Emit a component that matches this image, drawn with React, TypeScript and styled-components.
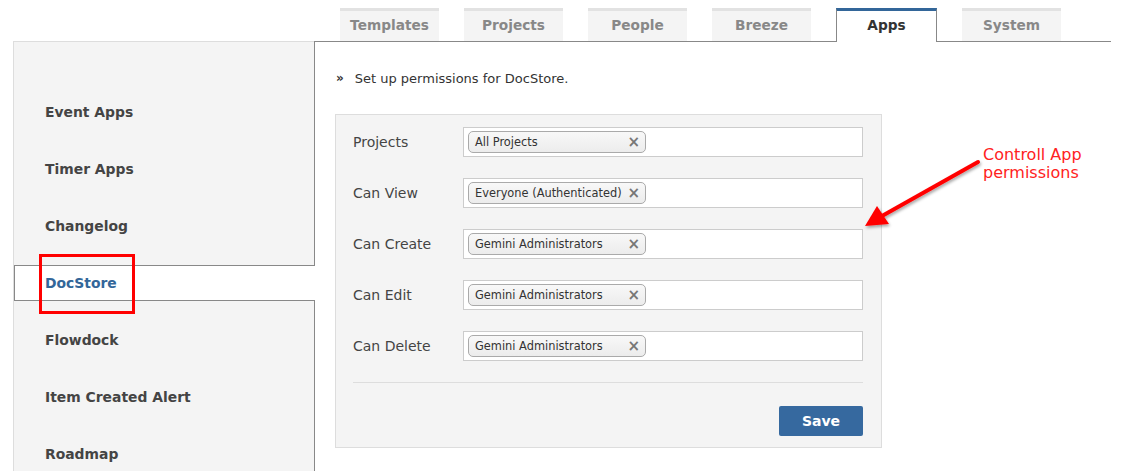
import React from "react";
import styled, { createGlobalStyle } from "styled-components";

const GlobalStyle = createGlobalStyle`
  html, body {
    margin: 0;
    padding: 0;
    background: #fff;
    font-family: "DejaVu Sans", Verdana, sans-serif;
  }
`;

const Page = styled.div`
  position: relative;
  width: 1131px;
  height: 471px;
  overflow: hidden;
  padding-top: 8px;
  box-sizing: border-box;
`;

const TabBar = styled.div`
  display: flex;
  gap: 25px;
  margin-left: 340px;
  position: relative;
  z-index: 2;
`;

const Tab = styled.div<{ $active?: boolean }>`
  width: ${(p) => (p.$active ? "101px" : "99px")};
  box-sizing: border-box;
  display: flex;
  align-items: center;
  justify-content: center;
  font-size: 13.7px;
  font-weight: bold;
  color: ${(p) => (p.$active ? "#333" : "#888")};
  background: ${(p) => (p.$active ? "#fff" : "#f4f4f4")};
  border-top: 3px solid ${(p) => (p.$active ? "#336699" : "#e2e2e2")};
  border-left: ${(p) => (p.$active ? "1px solid #888" : "none")};
  border-right: ${(p) => (p.$active ? "1px solid #888" : "none")};
  margin-bottom: ${(p) => (p.$active ? "-1px" : "0")};
  height: ${(p) => (p.$active ? "34px" : "33px")};
  padding-bottom: ${(p) => (p.$active ? "3px" : "2px")};
`;

const Body = styled.div`
  display: flex;
  margin-left: 13px;
`;

const Sidebar = styled.div`
  width: 301px;
  height: 440px;
  box-sizing: border-box;
  background: #f4f4f4;
  border-top: 1px solid #ddd;
  border-left: 1px solid #ddd;
  padding-top: 52px;
  display: flex;
  flex-direction: column;
  gap: 21px;
  position: relative;
  z-index: 1;
`;

const SideItem = styled.div<{ $active?: boolean }>`
  height: 36px;
  box-sizing: border-box;
  display: flex;
  align-items: center;
  padding-left: 30px;
  font-size: 13.9px;
  font-weight: bold;
  color: ${(p) => (p.$active ? "#336699" : "#444")};
  background: ${(p) => (p.$active ? "#fff" : "transparent")};
  border: ${(p) => (p.$active ? "1px solid #888" : "1px solid transparent")};
  border-right: none;
  margin-right: ${(p) => (p.$active ? "-1px" : "0")};
  position: relative;
`;

const Highlight = styled.div`
  position: absolute;
  left: 24px;
  top: -12px;
  width: 96px;
  height: 60px;
  box-sizing: border-box;
  border: 3px solid #f00;
`;

const Main = styled.div`
  width: 797px;
  height: 440px;
  box-sizing: border-box;
  border-top: 1px solid #888;
  border-left: 1px solid #888;
  padding: 28px 0 0 20px;
`;

const Intro = styled.div`
  display: flex;
  align-items: center;
  gap: 11px;
  padding-left: 1px;
  font-size: 13px;
  color: #333;
  height: 16px;
`;

const Chevron = styled.span`
  font-size: 12px;
  font-weight: bold;
  color: #333;
`;

const Panel = styled.div`
  margin-top: 28px;
  width: 547px;
  box-sizing: border-box;
  background: #f4f4f4;
  border: 1px solid #ddd;
  padding: 12px 18px 11px 17px;
`;

const Rows = styled.div`
  display: flex;
  flex-direction: column;
  gap: 21px;
`;

const Row = styled.div`
  display: flex;
  align-items: center;
`;

const Label = styled.div`
  width: 110px;
  font-size: 14px;
  color: #444;
`;

const Input = styled.div`
  width: 400px;
  height: 30px;
  box-sizing: border-box;
  background: #fff;
  border: 1px solid #ccc;
  display: flex;
  align-items: center;
  padding-left: 4px;
`;

const Chip = styled.div`
  width: 178px;
  height: 22px;
  box-sizing: border-box;
  border: 1px solid #aaa;
  border-radius: 5px;
  background: linear-gradient(#f8f8f8, #ececec);
  display: flex;
  align-items: center;
  justify-content: space-between;
  padding: 0 5px 0 6px;
  font-size: 11.4px;
  color: #333;
`;

const ChipClose = styled.span`
  font-size: 15px;
  font-weight: bold;
  color: #777;
  line-height: 1;
`;

const Divider = styled.div`
  height: 1px;
  background: #ddd;
  margin: 21px 0 23px 0;
`;

const Actions = styled.div`
  display: flex;
  justify-content: flex-end;
`;

const SaveButton = styled.button`
  width: 84px;
  height: 30px;
  border: none;
  border-radius: 2px;
  background: #36699f;
  color: #fff;
  font-family: "DejaVu Sans", Verdana, sans-serif;
  font-size: 14px;
  font-weight: bold;
`;

const Note = styled.div`
  position: absolute;
  left: 983px;
  top: 146px;
  font-size: 16px;
  line-height: 18px;
  color: #f22;
`;

const Arrow = styled.svg`
  position: absolute;
  left: 850px;
  top: 150px;
  overflow: visible;
`;

const tabs = ["Templates", "Projects", "People", "Breeze", "Apps", "System"];
const apps = [
  "Event Apps",
  "Timer Apps",
  "Changelog",
  "DocStore",
  "Flowdock",
  "Item Created Alert",
  "Roadmap",
];
const perms = [
  { label: "Projects", value: "All Projects" },
  { label: "Can View", value: "Everyone (Authenticated)" },
  { label: "Can Create", value: "Gemini Administrators" },
  { label: "Can Edit", value: "Gemini Administrators" },
  { label: "Can Delete", value: "Gemini Administrators" },
];

export default function App() {
  return (
    <>
      <GlobalStyle />
      <Page>
        <TabBar>
          {tabs.map((t) => (
            <Tab key={t} $active={t === "Apps"}>
              {t}
            </Tab>
          ))}
        </TabBar>
        <Body>
          <Sidebar>
            {apps.map((a) => (
              <SideItem key={a} $active={a === "DocStore"}>
                {a}
                {a === "DocStore" && <Highlight />}
              </SideItem>
            ))}
          </Sidebar>
          <Main>
            <Intro>
              <Chevron>»</Chevron>
              Set up permissions for DocStore.
            </Intro>
            <Panel>
              <Rows>
                {perms.map((p) => (
                  <Row key={p.label}>
                    <Label>{p.label}</Label>
                    <Input>
                      <Chip>
                        {p.value}
                        <ChipClose>×</ChipClose>
                      </Chip>
                    </Input>
                  </Row>
                ))}
              </Rows>
              <Divider />
              <Actions>
                <SaveButton>Save</SaveButton>
              </Actions>
            </Panel>
          </Main>
        </Body>
        <Note>
          Controll App
          <br />
          permissions
        </Note>
        <Arrow width="140" height="90" viewBox="850 150 140 90">
          <defs>
            <filter id="sh" x="-20%" y="-20%" width="140%" height="140%">
              <feDropShadow dx="1" dy="2" stdDeviation="1.5" floodColor="#000" floodOpacity="0.35" />
            </filter>
          </defs>
          <g filter="url(#sh)">
            <line x1="978" y1="162" x2="882" y2="216" stroke="#f00" strokeWidth="4" strokeLinecap="round" />
            <polygon points="865,226 877,206 889,224" fill="#f00" />
          </g>
        </Arrow>
      </Page>
    </>
  );
}
